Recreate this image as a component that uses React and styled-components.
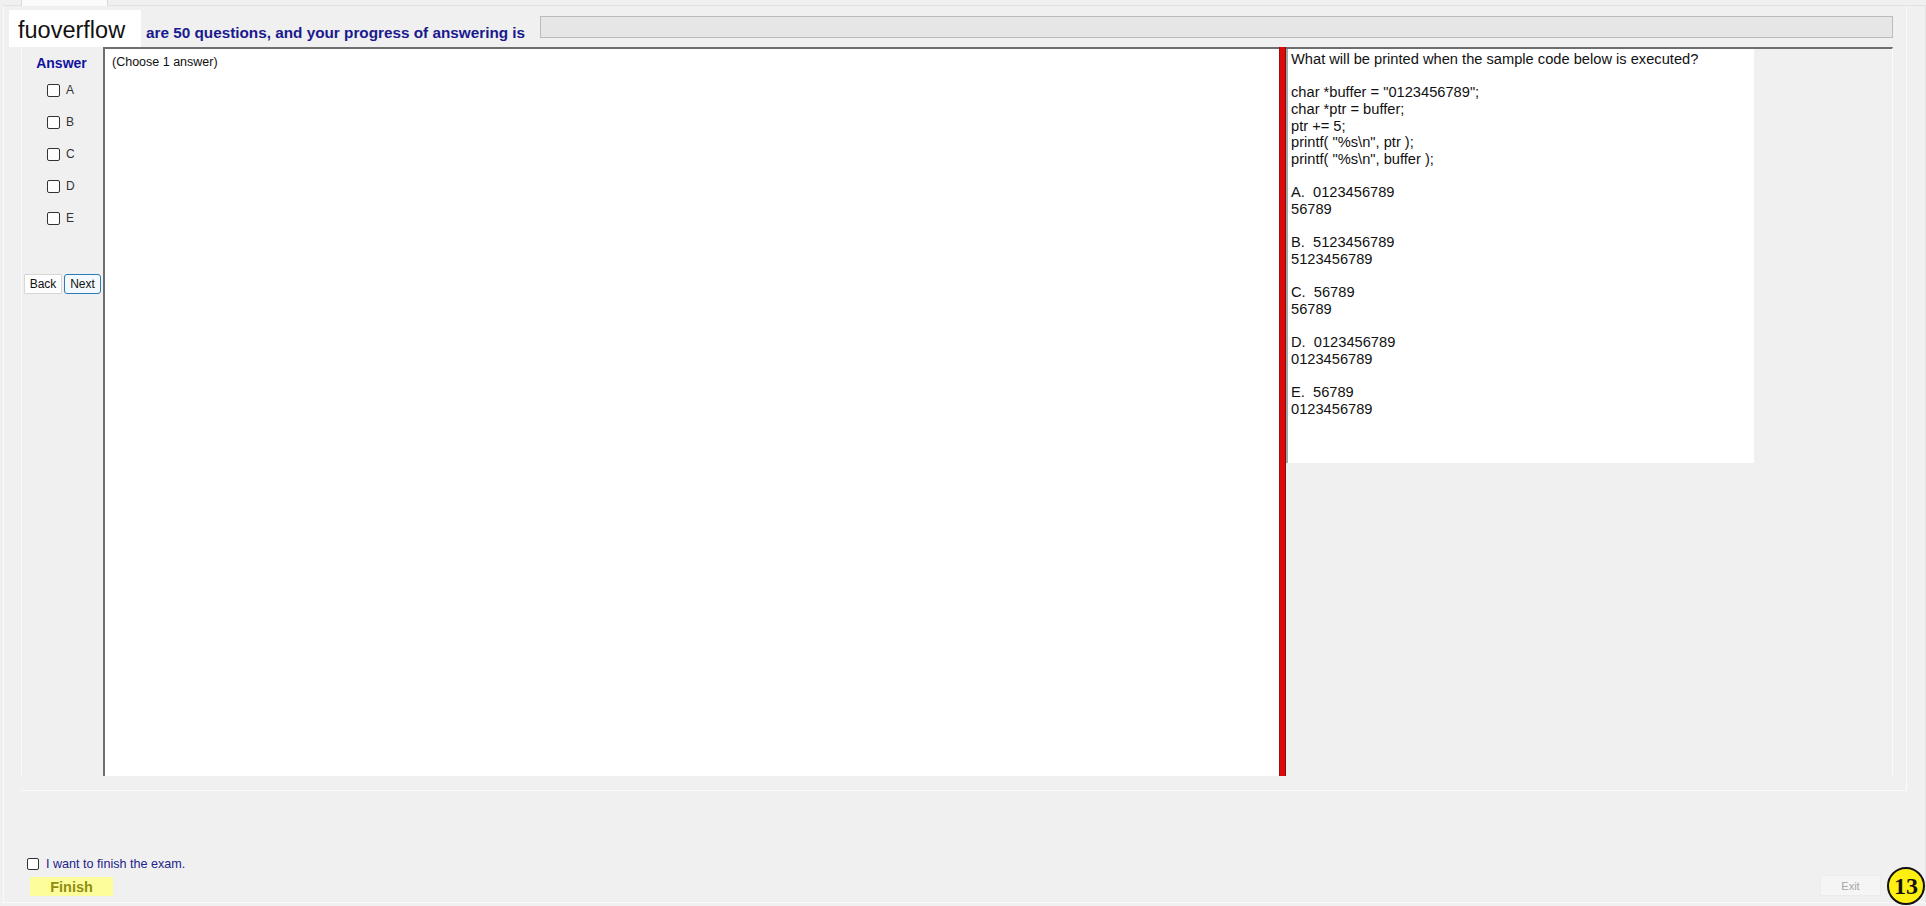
import styled, { createGlobalStyle } from "styled-components";

const questionLines = [
  "What will be printed when the sample code below is executed?",
  "",
  'char *buffer = "0123456789";',
  "char *ptr = buffer;",
  "ptr += 5;",
  'printf( "%s\\n", ptr );',
  'printf( "%s\\n", buffer );',
  "",
  "A.  0123456789",
  "56789",
  "",
  "B.  5123456789",
  "5123456789",
  "",
  "C.  56789",
  "56789",
  "",
  "D.  0123456789",
  "0123456789",
  "",
  "E.  56789",
  "0123456789",
];

const options = ["A", "B", "C", "D", "E"];

export default function App() {
  return (
    <Page>
      <GlobalStyle />
      <TabStrip>
        <Tab />
      </TabStrip>
      <TabPage>
        <Frame>
          <HeaderRow>
            <HeaderText>are 50 questions, and your progress of answering is</HeaderText>
            <Progress />
          </HeaderRow>
          <ContentRow>
            <AnswerCol>
              <AnswerLabel>Answer</AnswerLabel>
              {options.map((o) => (
                <OptionRow key={o}>
                  <Check />
                  <span>{o}</span>
                </OptionRow>
              ))}
              <NavRow>
                <NavButton>Back</NavButton>
                <NavButton $focused>Next</NavButton>
              </NavRow>
            </AnswerCol>
            <QuestionArea>(Choose 1 answer)</QuestionArea>
            <Splitter />
            <RightPane>
              <QuestionBox>
                {questionLines.map((l, i) => (
                  <Line key={i}>{l || "\u00a0"}</Line>
                ))}
              </QuestionBox>
            </RightPane>
          </ContentRow>
        </Frame>
        <BottomBar>
          <FinishCol>
            <FinishRow>
              <Check $small />
              <span>I want to finish the exam.</span>
            </FinishRow>
            <FinishButton>Finish</FinishButton>
          </FinishCol>
          <ExitButton>Exit</ExitButton>
        </BottomBar>
      </TabPage>
      <Brand>fuoverflow</Brand>
      <Badge>13</Badge>
    </Page>
  );
}

const GlobalStyle = createGlobalStyle`
  html, body {
    margin: 0;
    padding: 0;
    overflow: hidden;
    background: #f0f0f0;
  }
  * { box-sizing: border-box; }
`;

const Page = styled.div`
  position: relative;
  width: 1926px;
  height: 906px;
  background: #f0f0f0;
  display: flex;
  flex-direction: column;
  padding: 0 0 3px 3px;
  font-family: "Liberation Sans", Arial, sans-serif;
  color: #000;
`;

const TabStrip = styled.div`
  height: 6px;
  flex: none;
  border-bottom: 1px solid #e2e2e2;
`;

const Tab = styled.div`
  margin-left: 18px;
  width: 87px;
  height: 6px;
  background: #fbfbfb;
  border: 1px solid #d9d9d9;
  border-top: none;
  border-bottom: none;
`;

const TabPage = styled.div`
  flex: 1;
  display: flex;
  flex-direction: column;
  border-left: 1px solid #fafafa;
  border-bottom: 1px solid #fafafa;
  border-right: 1px solid #e4e4e4;
`;

const Frame = styled.div`
  margin-left: 17px;
  width: 1886px;
  display: flex;
  flex-direction: column;
  padding: 0 13px 14px 0;
  border-right: 1px solid #fbfbfb;
  border-bottom: 1px solid #fbfbfb;
`;

const HeaderRow = styled.div`
  height: 41px;
  display: flex;
  align-items: flex-start;
  padding-left: 125px;
`;

const HeaderText = styled.div`
  margin-top: 18px;
  font-size: 15.3px;
  line-height: 17px;
  font-weight: bold;
  color: #1a1a8e;
  white-space: nowrap;
`;

const Progress = styled.div`
  margin-left: auto;
  margin-top: 10px;
  width: 1353px;
  height: 22px;
  background: #e6e6e6;
  border: 1px solid #bcbcbc;
`;

const ContentRow = styled.div`
  height: 729px;
  display: flex;
`;

const AnswerCol = styled.div`
  width: 82px;
  flex: none;
  display: flex;
  flex-direction: column;
  padding-top: 8px;
  border-left: 1px solid #fbfbfb;
`;

const AnswerLabel = styled.div`
  height: 16px;
  line-height: 16px;
  text-align: center;
  font-size: 14px;
  font-weight: bold;
  color: #1212a2;
  margin-bottom: 3px;
  padding-right: 2px;
`;

const OptionRow = styled.div`
  height: 32px;
  display: flex;
  align-items: center;
  gap: 6px;
  padding-left: 25px;
  font-size: 12px;
  color: #333;
`;

const Check = styled.span`
  display: inline-block;
  width: ${(p) => (p.$small ? 12 : 13)}px;
  height: ${(p) => (p.$small ? 12 : 13)}px;
  background: #fff;
  border: 1px solid #333;
  border-radius: 2px;
  flex: none;
`;

const NavRow = styled.div`
  display: flex;
  gap: 2px;
  margin-top: 40px;
  padding-left: 2px;
`;

const NavButton = styled.div`
  width: ${(p) => (p.$focused ? 37 : 38)}px;
  height: 20px;
  display: flex;
  align-items: center;
  justify-content: center;
  font-size: 12px;
  color: #111;
  background: ${(p) => (p.$focused ? "#f4f9fd" : "#fdfdfd")};
  border: 1px solid ${(p) => (p.$focused ? "#2a7ab8" : "#d6d6d6")};
  border-radius: ${(p) => (p.$focused ? 3 : 1)}px;
`;

const QuestionArea = styled.div`
  width: 1176px;
  flex: none;
  background: #fff;
  border-top: 2px solid #6e6e6e;
  border-left: 2px solid #6e6e6e;
  padding: 6px 7px;
  font-size: 12.5px;
  line-height: 14px;
  color: #111;
`;

const Splitter = styled.div`
  width: 7px;
  flex: none;
  background: #dc0a0a;
  border-left: 1px solid #9a1010;
  border-right: 1px solid #7c1010;
`;

const RightPane = styled.div`
  flex: 1;
  border-top: 2px solid #6e6e6e;
  border-right: 1px solid #fbfbfb;
  background: #f0f0f0;
`;

const QuestionBox = styled.div`
  width: 468px;
  height: 414px;
  background: #fff;
  border-left: 2px solid #a6a6a6;
  padding: 2px 3px;
  font-size: 14.67px;
  line-height: 16.65px;
  color: #111;
`;

const Line = styled.div`
  white-space: pre;
`;

const BottomBar = styled.div`
  margin-top: auto;
  display: flex;
  align-items: flex-end;
  justify-content: space-between;
  padding: 0 44px 6px 23px;
`;

const FinishCol = styled.div`
  display: flex;
  flex-direction: column;
  gap: 6px;
`;

const FinishRow = styled.div`
  display: flex;
  align-items: center;
  gap: 7px;
  font-size: 12.6px;
  color: #22228a;
`;

const FinishButton = styled.div`
  margin-left: 3px;
  width: 83px;
  height: 19px;
  background: #fdfd9c;
  color: #8e8e10;
  font-size: 14.5px;
  font-weight: bold;
  display: flex;
  align-items: center;
  justify-content: center;
`;

const ExitButton = styled.div`
  width: 61px;
  height: 21px;
  background: #f5f5f5;
  border: 1px solid #ececec;
  color: #a6a6a6;
  font-size: 11px;
  display: flex;
  align-items: center;
  justify-content: center;
`;

const Brand = styled.div`
  position: absolute;
  left: 9px;
  top: 10px;
  width: 132px;
  height: 37px;
  background: #fff;
  color: #111;
  font-size: 23.5px;
  display: flex;
  align-items: center;
  padding: 4px 0 0 9px;
`;

const Badge = styled.div`
  position: absolute;
  right: 1px;
  bottom: 1px;
  width: 38px;
  height: 38px;
  border-radius: 50%;
  background: #ffee11;
  border: 2px solid #111;
  display: flex;
  align-items: center;
  justify-content: center;
  font-family: "Liberation Serif", "Times New Roman", serif;
  font-weight: bold;
  font-size: 24px;
  color: #111;
`;
